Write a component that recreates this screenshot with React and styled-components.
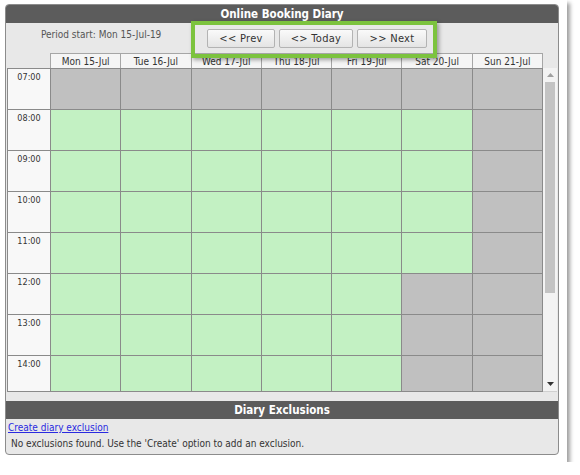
import styled, { createGlobalStyle } from "styled-components";

const GlobalStyle = createGlobalStyle`
  body {
    margin: 0;
    background: #ffffff;
    font-family: "DejaVu Sans Condensed", "DejaVu Sans", Verdana, sans-serif;
  }
`;

const days = [
  { label: "Mon 15-Jul", open: 8, close: 24 },
  { label: "Tue 16-Jul", open: 8, close: 24 },
  { label: "Wed 17-Jul", open: 8, close: 24 },
  { label: "Thu 18-Jul", open: 8, close: 24 },
  { label: "Fri 19-Jul", open: 8, close: 24 },
  { label: "Sat 20-Jul", open: 8, close: 12 },
  { label: "Sun 21-Jul", open: 0, close: 0 },
];

const hours = [7, 8, 9, 10, 11, 12, 13, 14];

// white mat with a drop shadow around the diary panel
const Frame = styled.div`
  position: relative;
  width: 567px;
  box-sizing: border-box;
  padding: 4px 8px 7px 5px;
  background: #fff;
  box-shadow: 3px 3px 4px rgba(0, 0, 0, 0.38);
`;

const Panel = styled.div`
  width: 554px;
  height: 451px;
  box-sizing: border-box;
  border: 1px solid #8c8c8c;
  border-radius: 4px;
  overflow: hidden;
  background: #e8e8e8;
  display: flex;
  flex-direction: column;
`;

const Bar = styled.div`
  height: ${(p) => p.h}px;
  flex: none;
  background: #5c5c5c;
  color: #fff;
  font-weight: bold;
  font-size: 11.5px;
  display: flex;
  align-items: center;
  justify-content: center;
`;

const Toolbar = styled.div`
  height: 30px;
  flex: none;
  display: flex;
  align-items: flex-start;
`;

const PeriodText = styled.div`
  font-size: 10px;
  color: #555;
  margin: 6px 0 0 35px;
  width: 166px;
`;

const ButtonGroup = styled.div`
  display: flex;
  gap: 4px;
  margin-top: 6px;
`;

const NavButton = styled.button`
  width: ${(p) => p.w}px;
  height: 19px;
  padding: 0;
  border: 1px solid #b3b3b3;
  border-radius: 2px;
  background: linear-gradient(#fafafa, #e4e4e4);
  color: #333;
  font-family: inherit;
  font-size: 11px;
  letter-spacing: 0.3px;
`;

const Calendar = styled.div`
  margin: 0 1px;
  display: flex;
  flex-direction: column;
`;

const HeadRow = styled.div`
  display: grid;
  grid-template-columns: 44px repeat(7, 1fr) 14px;
  height: 15px;
`;

const HeadCell = styled.div`
  background: #f5f5f5;
  border: 1px solid #a6a6a6;
  border-bottom: none;
  margin-left: -1px;
  font-size: 10px;
  color: #333;
  display: flex;
  align-items: center;
  justify-content: center;
`;

const BodyRow = styled.div`
  display: flex;
  height: 324px;
`;

const Viewport = styled.div`
  flex: 1;
  overflow: hidden;
  border-left: 1px solid #8a8a8a;
  border-top: 1px solid #8a8a8a;
  border-bottom: 1px solid #8a8a8a;
  box-sizing: border-box;
`;

const Grid = styled.div`
  display: grid;
  grid-template-columns: 43px repeat(7, 1fr);
  grid-auto-rows: 41px;
`;

const TimeCell = styled.div`
  background: #f8f8f8;
  border-right: 1px solid #8a8a8a;
  border-bottom: 1px solid #8a8a8a;
  font-size: 9px;
  color: #333;
  text-align: center;
  padding-top: 3px;
`;

const Slot = styled.div`
  background: ${(p) => (p.open ? "#c3f1c3" : "#c0c0c0")};
  border-right: 1px solid #8a8a8a;
  border-bottom: 1px solid #8a8a8a;
`;

const Scrollbar = styled.div`
  width: 14px;
  flex: none;
  background: #f3f3f3;
  border-bottom: 1px solid #d0d0d0;
  display: flex;
  flex-direction: column;
  align-items: center;
  box-sizing: border-box;
`;

const Arrow = styled.div`
  height: 14px;
  display: flex;
  align-items: center;
  justify-content: center;
`;

const Thumb = styled.div`
  width: 10px;
  height: 211px;
  background: #c3c3c3;
`;

const Track = styled.div`
  flex: 1;
`;

const Strip = styled.div`
  height: 9px;
  flex: none;
`;

const Footer = styled.div`
  padding: 2px 2px 0;
  font-size: 10px;
`;

const Link = styled.a`
  color: #2a2ae0;
  text-decoration: underline;
  display: block;
  line-height: 14px;
`;

const Message = styled.div`
  color: #333;
  margin: 3px 0 0 3px;
`;

// green highlight drawn around the navigation buttons
const Callout = styled.div`
  position: absolute;
  left: 191px;
  top: 21px;
  width: 246px;
  height: 37px;
  box-sizing: border-box;
  border: 4px solid #7cc33e;
  box-shadow: 2px 2px 4px rgba(0, 0, 0, 0.35);
  pointer-events: none;
`;

const pad = (h) => `${String(h).padStart(2, "0")}:00`;

export default function App() {
  return (
    <>
      <GlobalStyle />
      <Frame>
        <Panel>
          <Bar h={18}>Online Booking Diary</Bar>
          <Toolbar>
            <PeriodText>Period start: Mon 15-Jul-19</PeriodText>
            <ButtonGroup>
              <NavButton w={68}>&lt;&lt; Prev</NavButton>
              <NavButton w={74}>&lt;&gt; Today</NavButton>
              <NavButton w={70}>&gt;&gt; Next</NavButton>
            </ButtonGroup>
          </Toolbar>
          <Calendar>
            <HeadRow>
              <div />
              {days.map((d) => (
                <HeadCell key={d.label}>{d.label}</HeadCell>
              ))}
              <div />
            </HeadRow>
            <BodyRow>
              <Viewport>
                <Grid>
                  {hours.map((h) => [
                    <TimeCell key={h}>{pad(h)}</TimeCell>,
                    ...days.map((d) => (
                      <Slot key={h + d.label} open={h >= d.open && h < d.close} />
                    )),
                  ])}
                </Grid>
              </Viewport>
              <Scrollbar>
                <Arrow>
                  <svg width="7" height="4" viewBox="0 0 7 4">
                    <path d="M0 4 L3.5 0 L7 4 Z" fill="#a0a0a0" />
                  </svg>
                </Arrow>
                <Thumb />
                <Track />
                <Arrow>
                  <svg width="7" height="4" viewBox="0 0 7 4">
                    <path d="M0 0 L3.5 4 L7 0 Z" fill="#333" />
                  </svg>
                </Arrow>
              </Scrollbar>
            </BodyRow>
          </Calendar>
          <Strip />
          <Bar h={18}>Diary Exclusions</Bar>
          <Footer>
            <Link href="#">Create diary exclusion</Link>
            <Message>
              No exclusions found. Use the 'Create' option to add an exclusion.
            </Message>
          </Footer>
        </Panel>
        <Callout />
      </Frame>
    </>
  );
}
